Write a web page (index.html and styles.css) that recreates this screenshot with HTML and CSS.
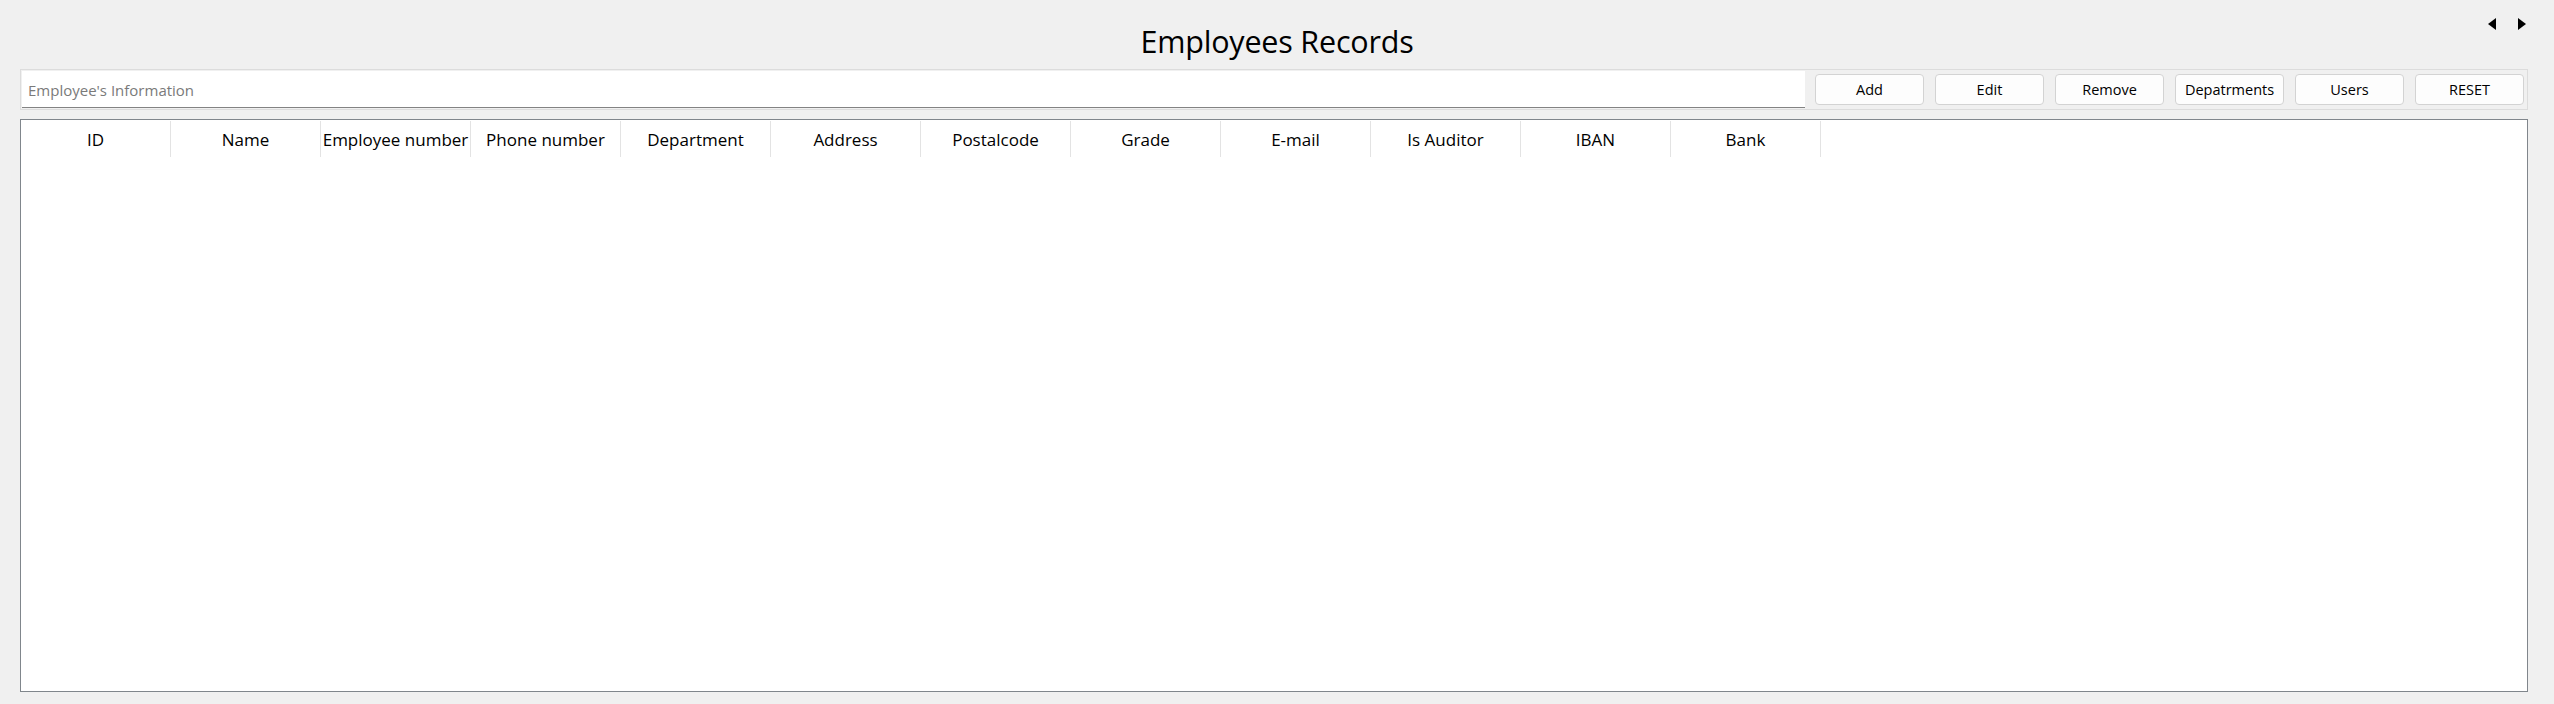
FILE: index.html
```html
<!DOCTYPE html>
<html>
<head>
<meta charset="utf-8">
<link rel="stylesheet" href="styles.css">
</head>
<body>
<div class="window">
  <div class="title-bar">
    <h1 class="title">Employees Records</h1>
    <div class="nav-arrows">
      <svg class="arrow" width="8" height="12" viewBox="0 0 8 12"><polygon points="8,0 8,12 0,6" fill="#000"/></svg>
      <svg class="arrow" width="8" height="12" viewBox="0 0 8 12"><polygon points="0,0 0,12 8,6" fill="#000"/></svg>
    </div>
  </div>
  <div class="toolbar">
    <div class="search"><span class="placeholder">Employee's Information</span></div>
    <div class="buttons">
      <button class="btn">Add</button>
      <button class="btn">Edit</button>
      <button class="btn">Remove</button>
      <button class="btn">Depatrments</button>
      <button class="btn">Users</button>
      <button class="btn">RESET</button>
    </div>
  </div>
  <div class="table">
    <div class="header">
      <div class="col"><span>ID</span></div>
      <div class="col"><span>Name</span></div>
      <div class="col"><span>Employee number</span></div>
      <div class="col"><span>Phone number</span></div>
      <div class="col"><span>Department</span></div>
      <div class="col"><span>Address</span></div>
      <div class="col"><span>Postalcode</span></div>
      <div class="col"><span>Grade</span></div>
      <div class="col"><span>E-mail</span></div>
      <div class="col"><span>Is Auditor</span></div>
      <div class="col"><span>IBAN</span></div>
      <div class="col"><span>Bank</span></div>
    </div>
  </div>
</div>
</body>
</html>
```
FILE: styles.css
```css
html, body {
  margin: 0;
  padding: 0;
  background: #f0f0f0;
}
body {
  font-family: "Open Sans", "Noto Sans", sans-serif;
  color: #000;
  width: 2554px;
  height: 704px;
  overflow: hidden;
}
.window {
  display: flex;
  flex-direction: column;
  height: 704px;
}
.title-bar {
  position: relative;
  height: 69px;
  box-sizing: border-box;
  padding-top: 26px;
  display: flex;
  justify-content: center;
}
.title {
  margin: 0;
  font-weight: 400;
  font-size: 30.5px;
  line-height: 31px;
  letter-spacing: -0.2px;
}
.nav-arrows {
  position: absolute;
  top: 18px;
  left: 2488px;
  display: flex;
  gap: 22px;
}
.arrow {
  display: block;
}
.toolbar {
  margin: 0 26px 0 20px;
  height: 41px;
  box-sizing: border-box;
  border: 1px solid #dcdcdc;
  padding: 1px 3px 1px 1px;
  display: flex;
  align-items: center;
}
.search {
  flex: 1;
  align-self: stretch;
  background: #fff;
  border-bottom: 1px solid #838383;
  display: flex;
  align-items: center;
  padding-left: 6px;
  margin-right: 10px;
}
.placeholder {
  color: #7a7a7a;
  font-size: 15px;
  padding-top: 1px;
}
.buttons {
  display: flex;
  gap: 11px;
}
.btn {
  width: 109px;
  height: 31px;
  box-sizing: border-box;
  border: 1px solid #d3d3d3;
  border-radius: 4px;
  background: #fdfdfd;
  font-family: inherit;
  font-size: 14.5px;
  color: #000;
  padding: 0;
}
.table {
  margin: 9px 26px 12px 20px;
  flex: 1;
  background: #fff;
  border: 1px solid #80868c;
}
.header {
  display: flex;
  margin-top: 1px;
}
.col {
  width: 150px;
  height: 36px;
  box-sizing: border-box;
  border-right: 1px solid #e3e3e3;
  display: flex;
  justify-content: center;
  align-items: center;
  overflow: hidden;
  white-space: nowrap;
  font-size: 17px;
}
.col span {
  flex: none;
  padding-top: 1px;
}
```
